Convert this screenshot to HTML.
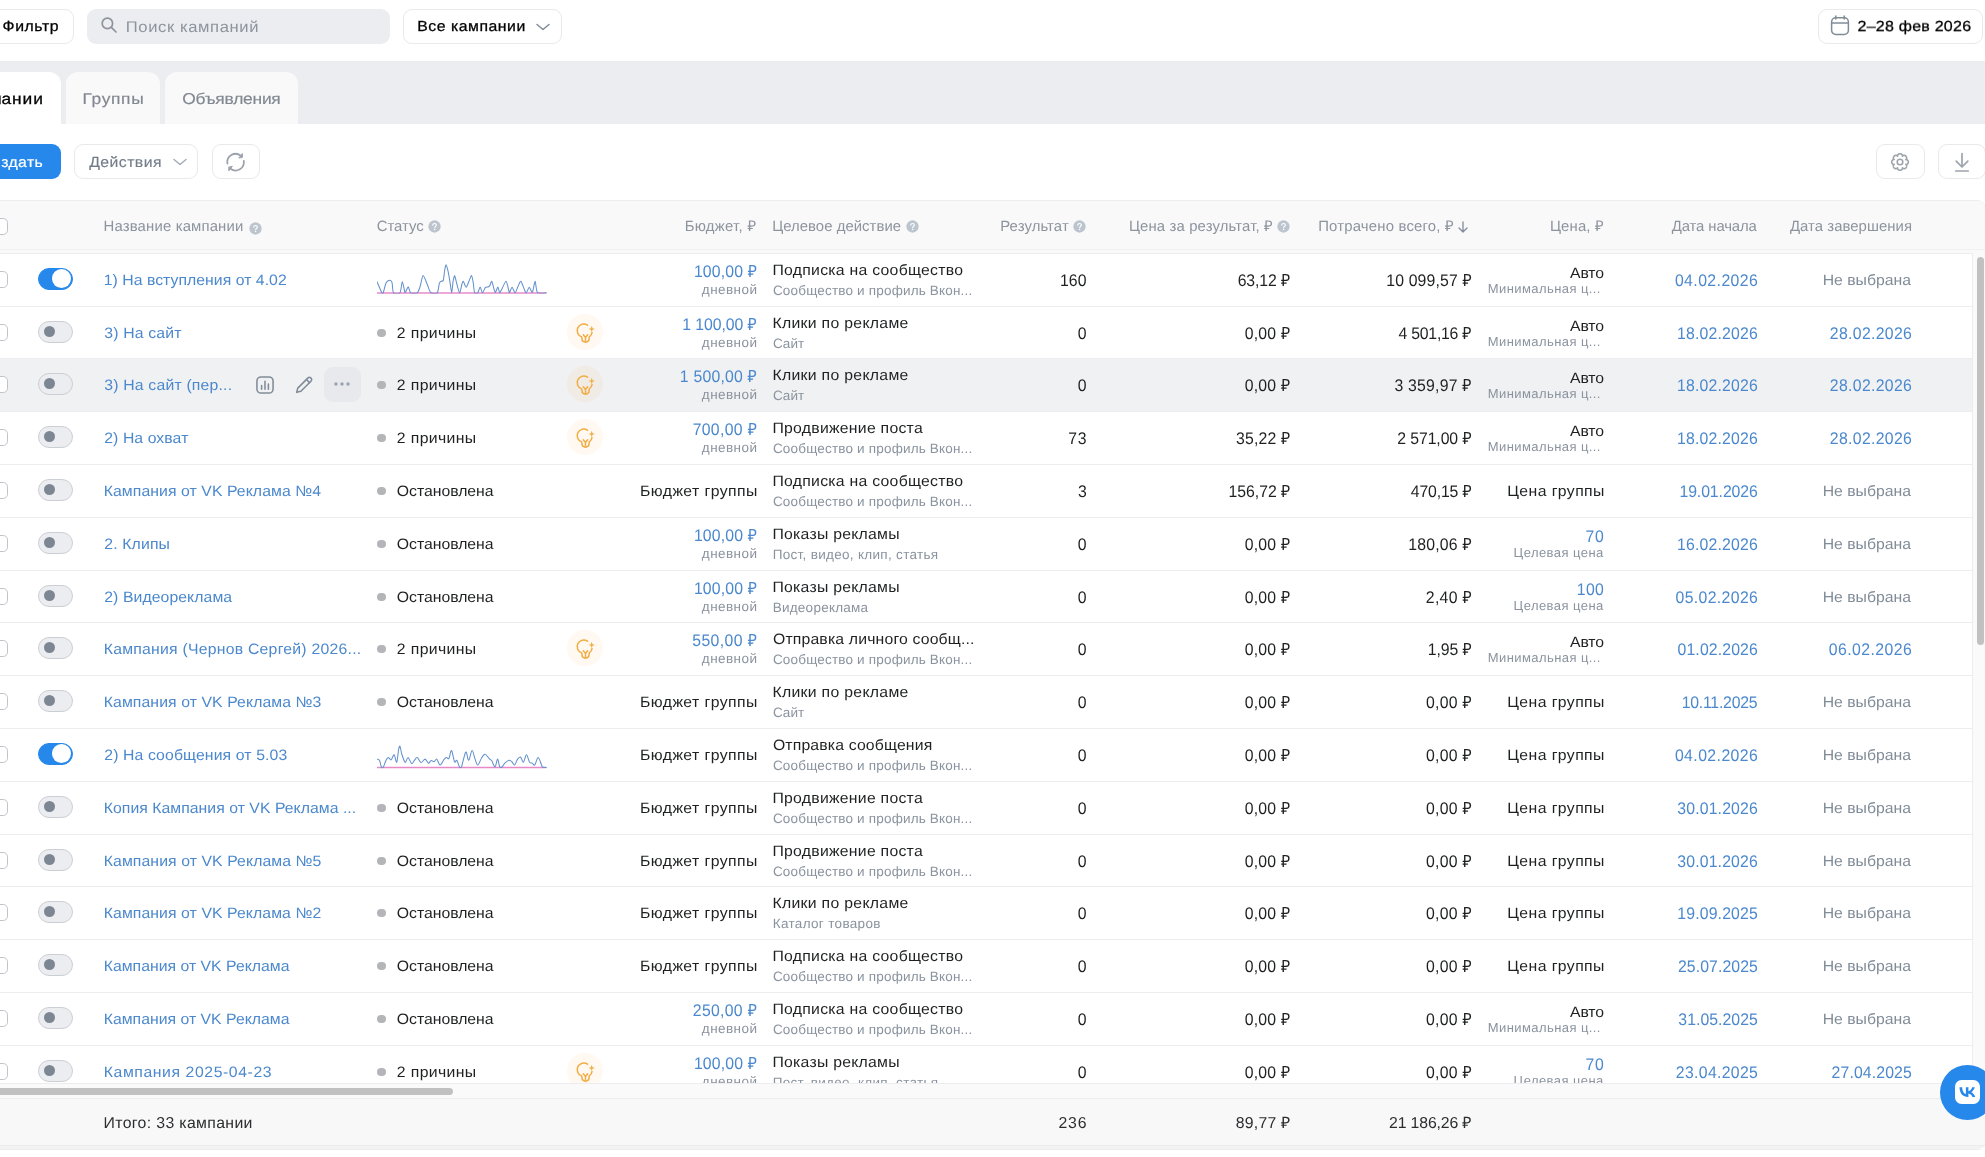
<!DOCTYPE html>
<html lang="ru"><head><meta charset="utf-8"><title>VK Реклама</title>
<style>
*{box-sizing:border-box;margin:0;padding:0}
html,body{width:1985px;height:1157px;overflow:hidden;background:#fff}
body{font-family:"Liberation Sans",sans-serif;font-size:15.8px;color:#000;position:relative;-webkit-font-smoothing:antialiased;text-rendering:geometricPrecision}
.t,.row{will-change:transform}
.abs{position:absolute}
.t span{position:absolute;line-height:20px;white-space:pre}
.btn{position:absolute;border:1px solid #e8e9eb;border-radius:9px;background:#fff;height:35px;top:8.5px;white-space:nowrap}
.band{position:absolute;left:0;top:60.6px;width:1985px;height:63.2px;background:#ebedf0}
.tab{position:absolute;top:71.5px;height:54px;background:#f9f9fa;border-radius:12px 12px 0 0}
.tab.act{background:#fff}
.tbl{position:absolute;left:-20px;top:199.5px;width:2005.5px;height:950.7px;background-clip:padding-box;border:1px solid #ededf0;border-radius:9px;background:#fff}
.thead{position:absolute;left:0;top:200.5px;width:1984.5px;height:52.5px;background:#f9f9fa;border-radius:0 8px 0 0}
.row{position:absolute;left:0;width:1972px;border-top:1px solid #ededf0;white-space:nowrap;overflow:hidden}
.row.hover{background:#f0f1f3}
.row>*{margin-top:-1px}
.row span{position:absolute;line-height:20px;white-space:pre}
.cb{position:absolute;left:-9.8px;top:17.8px;width:17.5px;height:17.5px;border:1.8px solid #bfc4cb;border-radius:4.8px;background:#fff}
.tg{left:37.8px;top:15.3px;width:35px;height:22px;border-radius:11px;background:#ebedf0;border:1.4px solid #cbced3}
.tg i{position:absolute;left:5.200px;top:4.100px;width:11px;height:11px;border-radius:50%;background:#7d8793}
.tg.on{background:#2688eb;border-color:#2688eb}
.tg.on i{left:13.500px;top:0.200px;width:18.800px;height:18.800px;background:#fff}
.dot{left:377.1px;top:22.6px;width:8.800px;height:8.800px;border-radius:50%;background:#b3b5b9}
.spark{position:absolute}
.bulb{left:567.2px;top:8.4px;width:36px;height:36px;border-radius:50%;background:rgba(255,165,40,0.065)}
.bulb svg{position:absolute;left:0.8px;top:1.3px}
.ric{top:15.9px;width:22px;height:22px}
.more{left:324.4px;top:9.2px;width:36.300px;height:34.6px;border-radius:9px;background:#e8e9ec}
.more svg{position:absolute;left:7.100px;top:6.300px}
.vtrack{position:absolute;left:1972px;top:253px;width:13px;height:830.5px;background:#fafafa;border-left:1px solid #ededf0}
.vthumb{position:absolute;left:1976.600px;top:257px;width:7px;height:388px;border-radius:4px;background:#c1c1c1}
.htrack{position:absolute;left:0;top:1083.3px;width:1985px;height:14.400px;background:#fafafa;border-top:1px solid #ededf0}
.hthumb{position:absolute;left:-10px;top:1088.2px;width:462.5px;height:7px;border-radius:4px;background:#c1c1c1}
.foot{position:absolute;left:0;top:1097.5px;width:1984.5px;height:51.7px;background:#f3f3f4;border-top:1px solid #ededf0;border-radius:0 0 8px 0}
.foot i{position:absolute;left:0;top:0;width:100%;height:47.8px;background:#f8f8f9;border-bottom:1px solid #ececee}
.vk{position:absolute;left:1940px;top:1064.5px;width:55px;height:55px;border-radius:50%;background:#2688eb}
</style></head><body>

<!-- top bar -->
<div class="btn" style="left:-40px;width:113.500px;"></div>
<div class="abs" style="left:87px;top:8.500px;width:303px;height:35px;border-radius:9px;background:#ebedf0"></div>
<svg class="abs" style="left:99.7px;top:15.6px" width="18" height="18" viewBox="0 0 18 18" fill="none" stroke="#8e949d" stroke-width="1.700" stroke-linecap="round"><circle cx="7.400" cy="7.400" r="5.200"/><path d="M11.400 11.400l4.600 4.600"/></svg>
<div class="btn" style="left:403px;width:159px;">
<svg class="abs" style="left:130.500px;top:12.500px" width="16" height="10" viewBox="0 0 16 10" fill="none" stroke="#818c99" stroke-width="1.500" stroke-linecap="round" stroke-linejoin="round"><path d="M2 2.500l6 5 6-5"/></svg></div>
<div class="btn" style="left:1818px;width:165.3px;"><svg class="abs" style="left:10.700px;top:5.300px" width="20" height="21" viewBox="0 0 20 21" fill="none" stroke="#818c99" stroke-width="1.500" stroke-linecap="round"><rect x="1.600" y="2.800" width="16.800" height="16.600" rx="4.200"/><path d="M1.800 8h16.400M5.800 1v3M14.200 1v3"/></svg></div>

<!-- tabs band -->
<div class="band"></div>
<div class="tab act" style="left:-80px;width:141px"></div>
<div class="tab" style="left:65.500px;width:94.500px"></div>
<div class="tab" style="left:165px;width:133px"></div>
<div class="abs" style="left:0;top:123.800px;width:1985px;height:76px;background:#fff"></div>

<!-- toolbar -->
<div class="abs" style="left:-50px;top:144px;width:111px;height:35px;border-radius:9px;background:#2688eb"></div>
<div class="btn" style="left:74.400px;top:144px;width:124px;height:35px">
<svg class="abs" style="left:96.500px;top:12.300px" width="16" height="10" viewBox="0 0 16 10" fill="none" stroke="#a3adb8" stroke-width="1.500" stroke-linecap="round" stroke-linejoin="round"><path d="M2 2.500l6 5 6-5"/></svg></div>
<div class="btn" style="left:212.300px;top:144px;width:47.500px;height:35px"><svg class="abs" style="left:-1px;top:-1.300px" width="48" height="36" viewBox="0 0 48 36" fill="none" stroke="#9ba2ac" stroke-width="1.750" stroke-linecap="round" stroke-linejoin="round"><path d="M15.430 19.640A8.300 8.300 0 0 1 28.710 11.660"/><path d="M31.770 16.760A8.300 8.300 0 0 1 18.490 24.740"/><path d="M30.440 13.020L30.310 9.610L27.110 13.710Z" fill="#9ba2ac" stroke-width="1"/><path d="M16.760 23.380L16.890 26.790L20.090 22.690Z" fill="#9ba2ac" stroke-width="1"/></svg></div>
<div class="btn" style="left:1876px;top:144px;width:49px;height:35px"><svg class="abs" style="left:10.900px;top:4.900px" width="24" height="24" viewBox="0 0 24 24" fill="none" stroke="#9ea4ac" stroke-width="1.600" stroke-linejoin="round"><circle cx="12" cy="12" r="2.800"/><path d="M20.30 12.00 L20.28 12.33 L20.22 12.65 L20.12 12.96 L19.98 13.26 L19.80 13.55 L19.58 13.82 L19.31 14.06 L18.99 14.27 L18.59 14.43 L17.82 14.41 L18.38 14.94 L18.55 15.34 L18.63 15.71 L18.64 16.07 L18.61 16.42 L18.54 16.75 L18.42 17.06 L18.27 17.36 L18.08 17.62 L17.87 17.87 L17.62 18.08 L17.36 18.27 L17.06 18.42 L16.75 18.54 L16.42 18.61 L16.07 18.64 L15.71 18.63 L15.34 18.55 L14.94 18.38 L14.41 17.82 L14.43 18.59 L14.27 18.99 L14.06 19.31 L13.82 19.58 L13.55 19.80 L13.26 19.98 L12.96 20.12 L12.65 20.22 L12.33 20.28 L12.00 20.30 L11.67 20.28 L11.35 20.22 L11.04 20.12 L10.74 19.98 L10.45 19.80 L10.18 19.58 L9.94 19.31 L9.73 18.99 L9.57 18.59 L9.59 17.82 L9.06 18.38 L8.66 18.55 L8.29 18.63 L7.93 18.64 L7.58 18.61 L7.25 18.54 L6.94 18.42 L6.64 18.27 L6.38 18.08 L6.13 17.87 L5.92 17.62 L5.73 17.36 L5.58 17.06 L5.46 16.75 L5.39 16.42 L5.36 16.07 L5.37 15.71 L5.45 15.34 L5.62 14.94 L6.18 14.41 L5.41 14.43 L5.01 14.27 L4.69 14.06 L4.42 13.82 L4.20 13.55 L4.02 13.26 L3.88 12.96 L3.78 12.65 L3.72 12.33 L3.70 12.00 L3.72 11.67 L3.78 11.35 L3.88 11.04 L4.02 10.74 L4.20 10.45 L4.42 10.18 L4.69 9.94 L5.01 9.73 L5.41 9.57 L6.18 9.59 L5.62 9.06 L5.45 8.66 L5.37 8.29 L5.36 7.93 L5.39 7.58 L5.46 7.25 L5.58 6.94 L5.73 6.64 L5.92 6.38 L6.13 6.13 L6.38 5.92 L6.64 5.73 L6.94 5.58 L7.25 5.46 L7.58 5.39 L7.93 5.36 L8.29 5.37 L8.66 5.45 L9.06 5.62 L9.59 6.18 L9.57 5.41 L9.73 5.01 L9.94 4.69 L10.18 4.42 L10.45 4.20 L10.74 4.02 L11.04 3.88 L11.35 3.78 L11.67 3.72 L12.00 3.70 L12.33 3.72 L12.65 3.78 L12.96 3.88 L13.26 4.02 L13.55 4.20 L13.82 4.42 L14.06 4.69 L14.27 5.01 L14.43 5.41 L14.41 6.18 L14.94 5.62 L15.34 5.45 L15.71 5.37 L16.07 5.36 L16.42 5.39 L16.75 5.46 L17.06 5.58 L17.36 5.73 L17.62 5.92 L17.87 6.13 L18.08 6.38 L18.27 6.64 L18.42 6.94 L18.54 7.25 L18.61 7.58 L18.64 7.93 L18.63 8.29 L18.55 8.66 L18.38 9.06 L17.82 9.59 L18.59 9.57 L18.99 9.73 L19.31 9.94 L19.58 10.18 L19.80 10.45 L19.98 10.74 L20.12 11.04 L20.22 11.35 L20.28 11.67Z"/></svg></div>
<div class="btn" style="left:1938.200px;top:144px;width:48px;height:35px"><svg class="abs" style="left:10.500px;top:4.200px" width="24" height="24" viewBox="0 0 24 24" fill="none" stroke="#9ea4ac" stroke-width="1.700" stroke-linecap="round" stroke-linejoin="round"><path d="M12 4.500v13M6.200 12.200l5.800 5.800 5.800-5.800M5.800 22h12.400"/></svg></div>
<div class="t"><span style="left:2.55px;top:16.80px;font-size:15.8px;letter-spacing:0.590px;color:#000;-webkit-text-stroke:0.3px currentColor;transform:scaleY(0.93);transform-origin:0 15.4px;">Фильтр</span><span style="left:125.75px;top:17.10px;font-size:16.6px;letter-spacing:0.612px;color:#8e949d;transform:scaleY(0.93);transform-origin:0 15.7px;">Поиск кампаний</span><span style="left:417.25px;top:16.80px;font-size:15.8px;letter-spacing:0.527px;color:#000;-webkit-text-stroke:0.3px currentColor;transform:scaleY(0.93);transform-origin:0 15.4px;">Все кампании</span><span style="left:1857.55px;top:16.80px;font-size:16.0px;letter-spacing:0.238px;color:#000;-webkit-text-stroke:0.3px currentColor;transform:scaleY(0.93);transform-origin:0 15.4px;">2–28 фев 2026</span><span style="left:1.50px;top:87.60px;font-size:17.4px;letter-spacing:0.900px;color:#000;-webkit-text-stroke:0.3px currentColor;transform:scaleY(0.9);transform-origin:0 16px;">ании</span><span style="left:-7.65px;top:87.60px;font-size:17.4px;color:#000;-webkit-text-stroke:0.3px currentColor;transform:scaleY(0.9);transform-origin:0 16px;">п</span><span style="left:82.45px;top:87.60px;font-size:17.4px;letter-spacing:0.660px;color:#828891;-webkit-text-stroke:0.2px currentColor;transform:scaleY(0.9);transform-origin:0 16px;">Группы</span><span style="left:182.25px;top:87.60px;font-size:17.4px;letter-spacing:-0.228px;color:#828891;-webkit-text-stroke:0.2px currentColor;transform:scaleY(0.9);transform-origin:0 16px;">Объявления</span><span style="left:1.15px;top:153.40px;font-size:15.8px;letter-spacing:0.412px;color:#fff;-webkit-text-stroke:0.2px currentColor;transform:scaleY(0.93);transform-origin:0 15.4px;">здать</span><span style="left:89.20px;top:153.40px;font-size:15.8px;letter-spacing:0.436px;color:#727c89;-webkit-text-stroke:0.15px currentColor;transform:scaleY(0.93);transform-origin:0 15.4px;">Действия</span></div>

<!-- table -->
<div class="tbl"></div>
<div class="thead"></div><div class="abs" style="left:0;top:249px;width:1984px;height:1.300px;background:#f0f0f2"></div>
<span class="cb" style="top:217.800px"></span>
<div class="t"><span style="left:103.55px;top:217.00px;font-size:14.9px;letter-spacing:0.156px;color:#8d949e;">Название кампании</span><span style="left:376.65px;top:217.00px;font-size:14.9px;letter-spacing:0.010px;color:#8d949e;">Статус</span><span style="left:684.65px;top:217.00px;font-size:14.9px;letter-spacing:0.281px;color:#8d949e;">Бюджет, ₽</span><span style="left:772.15px;top:217.00px;font-size:14.9px;letter-spacing:0.043px;color:#8d949e;">Целевое действие</span><span style="left:1000.25px;top:217.00px;font-size:14.9px;letter-spacing:0.094px;color:#8d949e;">Результат</span><span style="left:1128.95px;top:217.00px;font-size:14.9px;letter-spacing:0.134px;color:#8d949e;">Цена за результат, ₽</span><span style="left:1318.15px;top:217.00px;font-size:14.9px;letter-spacing:0.197px;color:#8d949e;">Потрачено всего, ₽</span><span style="left:1549.95px;top:217.00px;font-size:14.9px;letter-spacing:0.150px;color:#8d949e;">Цена, ₽</span><span style="left:1671.80px;top:217.00px;font-size:14.9px;letter-spacing:-0.125px;color:#8d949e;">Дата начала</span><span style="left:1789.90px;top:217.00px;font-size:14.9px;letter-spacing:0.054px;color:#8d949e;">Дата завершения</span></div>
<svg class="abs" style="left:249.2px;top:221.8px" width="13" height="13" viewBox="0 0 16 16"><circle cx="8" cy="8" r="7.600" fill="#bcc4ce"/><path d="M5.900 6.300c0-1.200 1-2 2.200-2s2.100.800 2.100 1.900c0 1.600-2 1.700-2 3.300" fill="none" stroke="#fff" stroke-width="1.500" stroke-linecap="round"/><circle cx="8.100" cy="11.700" r="0.950" fill="#fff"/></svg><svg class="abs" style="left:428.0px;top:220.0px" width="13" height="13" viewBox="0 0 16 16"><circle cx="8" cy="8" r="7.600" fill="#bcc4ce"/><path d="M5.900 6.300c0-1.200 1-2 2.200-2s2.100.800 2.100 1.900c0 1.600-2 1.700-2 3.300" fill="none" stroke="#fff" stroke-width="1.500" stroke-linecap="round"/><circle cx="8.100" cy="11.700" r="0.950" fill="#fff"/></svg><svg class="abs" style="left:905.5px;top:220.0px" width="13" height="13" viewBox="0 0 16 16"><circle cx="8" cy="8" r="7.600" fill="#bcc4ce"/><path d="M5.900 6.300c0-1.200 1-2 2.200-2s2.100.800 2.100 1.900c0 1.600-2 1.700-2 3.300" fill="none" stroke="#fff" stroke-width="1.500" stroke-linecap="round"/><circle cx="8.100" cy="11.700" r="0.950" fill="#fff"/></svg><svg class="abs" style="left:1073.3px;top:220.0px" width="13" height="13" viewBox="0 0 16 16"><circle cx="8" cy="8" r="7.600" fill="#bcc4ce"/><path d="M5.900 6.300c0-1.200 1-2 2.200-2s2.100.800 2.100 1.900c0 1.600-2 1.700-2 3.300" fill="none" stroke="#fff" stroke-width="1.500" stroke-linecap="round"/><circle cx="8.100" cy="11.700" r="0.950" fill="#fff"/></svg><svg class="abs" style="left:1277.1px;top:220.0px" width="13" height="13" viewBox="0 0 16 16"><circle cx="8" cy="8" r="7.600" fill="#bcc4ce"/><path d="M5.900 6.300c0-1.200 1-2 2.200-2s2.100.800 2.100 1.900c0 1.600-2 1.700-2 3.300" fill="none" stroke="#fff" stroke-width="1.500" stroke-linecap="round"/><circle cx="8.100" cy="11.700" r="0.950" fill="#fff"/></svg>
<svg class="abs" style="left:1456.700px;top:220px" width="12" height="14" viewBox="0 0 12 14" fill="none" stroke="#838c98" stroke-width="1.300" stroke-linecap="round" stroke-linejoin="round"><path d="M6 1.800v10M2 8l4 4 4-4"/></svg>

<div class="abs" style="left:0;top:0;width:1985px;height:1083.300px;overflow:hidden">
<div class="row" style="top:253px;height:53px"><span class="cb"></span><span class="tg on"><i></i></span><span style="left:103.75px;top:18.00px;font-size:15.8px;letter-spacing:0.028px;color:#4b88cd;transform:scaleY(0.955);transform-origin:0 15.4px;">1) На вступления от 4.02</span><svg class="spark" style="left:377.3px;top:0" width="172" height="52" viewBox="0 0 172 52"><defs><clipPath id="c258"><rect x="-1" y="0" width="174" height="40.49"/></clipPath></defs><line x1="0" y1="39.94" x2="169.3" y2="39.94" stroke="#e88ac8" stroke-width="1.5"/><path d="M-0.03,28.67 C0.53,29.97 4.09,38.54 4.82,39.85 C5.54,41.15 5.72,40.99 6.21,39.85 C6.70,38.71 8.25,31.53 9.01,30.06 C9.77,28.60 12.03,27.32 12.74,27.27 C13.44,27.21 14.63,28.13 15.07,29.60 C15.50,31.06 15.54,38.65 16.47,39.85 C17.39,41.04 21.96,41.15 22.99,39.85 C24.02,38.54 24.74,28.72 25.32,28.67 C25.90,28.61 27.44,38.40 27.93,39.38 C28.42,40.36 29.11,37.68 29.51,37.05 C29.91,36.42 30.89,33.65 31.38,33.98 C31.87,34.30 32.67,39.16 33.71,39.85 C34.74,40.53 39.14,40.56 40.23,39.85 C41.32,39.14 42.34,35.80 43.03,33.79 C43.71,31.78 45.23,22.82 46.10,22.61 C46.97,22.39 49.59,29.95 50.48,31.93 C51.37,33.91 52.60,38.64 53.74,39.57 C54.89,40.49 59.26,40.96 60.27,39.85 C61.28,38.74 61.92,31.42 62.41,30.06 C62.90,28.70 64.00,28.53 64.46,28.20 C64.92,27.87 65.94,28.57 66.33,27.27 C66.71,25.96 67.40,18.81 67.72,17.02 C68.05,15.22 68.74,11.78 69.12,11.89 C69.50,12.00 70.55,16.04 70.99,17.95 C71.42,19.85 72.41,25.64 72.85,28.20 C73.28,30.75 74.33,39.85 74.71,39.85 C75.09,39.85 75.76,30.19 76.11,28.20 C76.46,26.21 77.26,22.47 77.70,22.79 C78.13,23.12 79.26,29.01 79.84,31.00 C80.42,32.98 82.04,39.85 82.63,39.85 C83.23,39.85 84.53,32.33 84.96,31.00 C85.40,29.66 85.87,28.01 86.36,28.39 C86.85,28.77 88.51,34.28 89.16,34.26 C89.81,34.24 91.33,29.56 91.95,28.20 C92.57,26.84 93.98,22.50 94.47,22.61 C94.96,22.72 95.79,27.15 96.15,29.13 C96.51,31.11 97.00,38.32 97.55,39.57 C98.09,40.82 100.16,40.50 100.81,39.85 C101.46,39.20 102.59,33.98 103.14,33.98 C103.68,33.98 104.87,39.76 105.47,39.85 C106.07,39.94 107.56,35.43 108.26,34.72 C108.97,34.02 110.98,34.06 111.53,33.79 C112.07,33.52 112.54,33.02 112.92,32.39 C113.30,31.76 114.30,27.90 114.79,28.39 C115.28,28.87 116.68,35.30 117.12,36.59 C117.55,37.87 118.08,39.69 118.52,39.38 C118.95,39.08 120.36,33.92 120.85,33.98 C121.33,34.03 122.22,39.65 122.71,39.85 C123.20,40.04 124.30,37.01 125.04,35.65 C125.78,34.30 128.29,28.09 129.05,28.20 C129.81,28.31 131.16,35.26 131.56,36.59 C131.97,37.91 132.08,39.84 132.49,39.57 C132.91,39.30 134.45,34.22 135.10,34.26 C135.76,34.29 137.41,39.90 138.09,39.85 C138.76,39.79 140.21,35.15 140.88,33.79 C141.56,32.43 143.10,27.87 143.86,28.20 C144.63,28.53 146.78,35.23 147.41,36.59 C148.04,37.95 148.70,40.12 149.27,39.85 C149.84,39.58 151.55,34.31 152.25,34.26 C152.96,34.20 154.64,40.07 155.33,39.38 C156.01,38.70 157.53,28.36 158.12,28.39 C158.72,28.41 159.15,38.23 160.45,39.57 C161.76,40.91 168.27,39.82 169.31,39.85" clip-path="url(#c258)" fill="none" stroke="#6391cd" stroke-width="1.05" stroke-linejoin="round" stroke-linecap="round"/></svg><span style="left:693.95px;top:10.40px;font-size:15.8px;letter-spacing:0.143px;color:#4b88cd;transform:scaleY(1.07);transform-origin:0 15.4px;">100,00 ₽</span><span style="left:701.85px;top:27.20px;font-size:13.5px;letter-spacing:0.442px;color:#8a939e;">дневной</span><span style="left:772.45px;top:8.10px;font-size:15.8px;letter-spacing:0.262px;color:#1f2021;transform:scaleY(0.955);transform-origin:0 15.4px;">Подписка на сообщество</span><span style="left:772.95px;top:28.30px;font-size:13.5px;letter-spacing:0.181px;color:#8a939e;">Сообщество и профиль Вкон...</span><span style="left:1059.95px;top:18.90px;font-size:15.8px;letter-spacing:0.100px;color:#1f2021;transform:scaleY(1.07);transform-origin:0 15.4px;">160</span><span style="left:1237.65px;top:18.90px;font-size:15.8px;letter-spacing:-0.092px;color:#1f2021;transform:scaleY(1.07);transform-origin:0 15.4px;">63,12 ₽</span><span style="left:1386.25px;top:18.90px;font-size:15.8px;letter-spacing:0.150px;color:#1f2021;transform:scaleY(1.07);transform-origin:0 15.4px;">10 099,57 ₽</span><span style="left:1570.00px;top:10.60px;font-size:15.8px;letter-spacing:-0.150px;color:#1f2021;transform:scaleY(0.955);transform-origin:0 15.4px;">Авто</span><span style="left:1487.80px;top:25.60px;font-size:13.0px;letter-spacing:0.417px;color:#8a939e;">Минимальная ц...</span><span style="left:1674.90px;top:18.90px;font-size:15.8px;letter-spacing:0.428px;color:#4b88cd;transform:scaleY(1.07);transform-origin:0 15.4px;">04.02.2026</span><span style="left:1822.65px;top:18.00px;font-size:15.8px;letter-spacing:-0.017px;color:#818c99;transform:scaleY(0.955);transform-origin:0 15.4px;">Не выбрана</span></div>
<div class="row" style="top:306px;height:52px"><span class="cb"></span><span class="tg "><i></i></span><span style="left:104.25px;top:18.00px;font-size:15.8px;letter-spacing:0.161px;color:#4b88cd;transform:scaleY(0.955);transform-origin:0 15.4px;">3) На сайт</span><span class="dot"></span><span style="left:396.85px;top:18.00px;font-size:15.8px;letter-spacing:0.356px;color:#1f2021;transform:scaleY(0.955);transform-origin:0 15.4px;">2 причины</span><span class="bulb"><svg width="36" height="36" viewBox="0 0 36 36" fill="none" stroke="#f2ac44" stroke-width="1.5" stroke-linecap="round" stroke-linejoin="round"><path d="M19.54 9.22A6.6 6.6 0 1 0 13.71 20.91L14.3 24.6Q17.5 27.6 20.7 24.6L21.29 20.91A6.6 6.6 0 0 0 24.04 16.42"/><path d="M15.3 18.8L17.5 21.5L19.7 18.8M17.5 21.5V24.8"/><path d="M23.7 9.7l.85 2.450 2.450.85-2.450.85-.85 2.450-.85-2.450-2.450-.85 2.450-.85z" fill="#f2ac44" stroke="none"/></svg></span><span style="left:682.35px;top:10.40px;font-size:15.8px;letter-spacing:-0.072px;color:#4b88cd;transform:scaleY(1.07);transform-origin:0 15.4px;">1 100,00 ₽</span><span style="left:701.85px;top:27.20px;font-size:13.5px;letter-spacing:0.442px;color:#8a939e;">дневной</span><span style="left:772.45px;top:8.10px;font-size:15.8px;letter-spacing:0.300px;color:#1f2021;transform:scaleY(0.955);transform-origin:0 15.4px;">Клики по рекламе</span><span style="left:772.95px;top:28.30px;font-size:13.5px;letter-spacing:0.017px;color:#8a939e;">Сайт</span><span style="left:1077.65px;top:18.90px;font-size:15.8px;color:#1f2021;transform:scaleY(1.07);transform-origin:0 15.4px;">0</span><span style="left:1244.70px;top:18.90px;font-size:15.8px;letter-spacing:0.230px;color:#1f2021;transform:scaleY(1.07);transform-origin:0 15.4px;">0,00 ₽</span><span style="left:1398.45px;top:18.90px;font-size:15.8px;letter-spacing:-0.217px;color:#1f2021;transform:scaleY(1.07);transform-origin:0 15.4px;">4 501,16 ₽</span><span style="left:1570.00px;top:10.60px;font-size:15.8px;letter-spacing:-0.150px;color:#1f2021;transform:scaleY(0.955);transform-origin:0 15.4px;">Авто</span><span style="left:1487.80px;top:25.60px;font-size:13.0px;letter-spacing:0.417px;color:#8a939e;">Минимальная ц...</span><span style="left:1677.05px;top:18.90px;font-size:15.8px;letter-spacing:0.189px;color:#4b88cd;transform:scaleY(1.07);transform-origin:0 15.4px;">18.02.2026</span><span style="left:1829.85px;top:18.90px;font-size:15.8px;letter-spacing:0.322px;color:#4b88cd;transform:scaleY(1.07);transform-origin:0 15.4px;">28.02.2026</span></div>
<div class="row hover" style="top:358px;height:53px"><span class="cb"></span><span class="tg "><i></i></span><span style="left:104.25px;top:18.00px;font-size:15.8px;letter-spacing:0.182px;color:#4b88cd;transform:scaleY(0.955);transform-origin:0 15.4px;">3) На сайт (пер...</span><span class="ric" style="left:254.4px"><svg width="22" height="22" viewBox="0 0 24 24" fill="none" stroke="#818c99" stroke-width="1.700" stroke-linecap="round"><rect x="3.200" y="3.200" width="17.600" height="17.600" rx="4.500"/><path d="M8.300 12.500v4M12 8v8.500M15.700 11v5.500"/></svg></span><span class="ric" style="left:292.5px"><svg width="22" height="22" viewBox="0 0 24 24" fill="none" stroke="#818c99" stroke-width="1.700" stroke-linecap="round" stroke-linejoin="round"><path d="M4 20l1.200-4.600L16.400 4.200a2 2 0 0 1 2.800 0l.6.600a2 2 0 0 1 0 2.800L8.600 18.800z"/><path d="M14.600 6l3.400 3.400"/></svg></span><span class="more"><svg width="22" height="22" viewBox="0 0 24 24" fill="#99a2ad"><circle cx="5.400" cy="12" r="1.850"/><circle cx="12" cy="12" r="1.850"/><circle cx="18.600" cy="12" r="1.850"/></svg></span><span class="dot"></span><span style="left:396.85px;top:18.00px;font-size:15.8px;letter-spacing:0.356px;color:#1f2021;transform:scaleY(0.955);transform-origin:0 15.4px;">2 причины</span><span class="bulb"><svg width="36" height="36" viewBox="0 0 36 36" fill="none" stroke="#f2ac44" stroke-width="1.5" stroke-linecap="round" stroke-linejoin="round"><path d="M19.54 9.22A6.6 6.6 0 1 0 13.71 20.91L14.3 24.6Q17.5 27.6 20.7 24.6L21.29 20.91A6.6 6.6 0 0 0 24.04 16.42"/><path d="M15.3 18.8L17.5 21.5L19.7 18.8M17.5 21.5V24.8"/><path d="M23.7 9.7l.85 2.450 2.450.85-2.450.85-.85 2.450-.85-2.450-2.450-.85 2.450-.85z" fill="#f2ac44" stroke="none"/></svg></span><span style="left:679.85px;top:10.40px;font-size:15.8px;letter-spacing:0.206px;color:#4b88cd;transform:scaleY(1.07);transform-origin:0 15.4px;">1 500,00 ₽</span><span style="left:701.85px;top:27.20px;font-size:13.5px;letter-spacing:0.442px;color:#8a939e;">дневной</span><span style="left:772.45px;top:8.10px;font-size:15.8px;letter-spacing:0.300px;color:#1f2021;transform:scaleY(0.955);transform-origin:0 15.4px;">Клики по рекламе</span><span style="left:772.95px;top:28.30px;font-size:13.5px;letter-spacing:0.017px;color:#8a939e;">Сайт</span><span style="left:1077.65px;top:18.90px;font-size:15.8px;color:#1f2021;transform:scaleY(1.07);transform-origin:0 15.4px;">0</span><span style="left:1244.70px;top:18.90px;font-size:15.8px;letter-spacing:0.230px;color:#1f2021;transform:scaleY(1.07);transform-origin:0 15.4px;">0,00 ₽</span><span style="left:1394.45px;top:18.90px;font-size:15.8px;letter-spacing:0.228px;color:#1f2021;transform:scaleY(1.07);transform-origin:0 15.4px;">3 359,97 ₽</span><span style="left:1570.00px;top:10.60px;font-size:15.8px;letter-spacing:-0.150px;color:#1f2021;transform:scaleY(0.955);transform-origin:0 15.4px;">Авто</span><span style="left:1487.80px;top:25.60px;font-size:13.0px;letter-spacing:0.417px;color:#8a939e;">Минимальная ц...</span><span style="left:1677.05px;top:18.90px;font-size:15.8px;letter-spacing:0.189px;color:#4b88cd;transform:scaleY(1.07);transform-origin:0 15.4px;">18.02.2026</span><span style="left:1829.85px;top:18.90px;font-size:15.8px;letter-spacing:0.322px;color:#4b88cd;transform:scaleY(1.07);transform-origin:0 15.4px;">28.02.2026</span></div>
<div class="row" style="top:411px;height:53px"><span class="cb"></span><span class="tg "><i></i></span><span style="left:104.25px;top:18.00px;font-size:15.8px;letter-spacing:0.070px;color:#4b88cd;transform:scaleY(0.955);transform-origin:0 15.4px;">2) На охват</span><span class="dot"></span><span style="left:396.85px;top:18.00px;font-size:15.8px;letter-spacing:0.356px;color:#1f2021;transform:scaleY(0.955);transform-origin:0 15.4px;">2 причины</span><span class="bulb"><svg width="36" height="36" viewBox="0 0 36 36" fill="none" stroke="#f2ac44" stroke-width="1.5" stroke-linecap="round" stroke-linejoin="round"><path d="M19.54 9.22A6.6 6.6 0 1 0 13.71 20.91L14.3 24.6Q17.5 27.6 20.7 24.6L21.29 20.91A6.6 6.6 0 0 0 24.04 16.42"/><path d="M15.3 18.8L17.5 21.5L19.7 18.8M17.5 21.5V24.8"/><path d="M23.7 9.7l.85 2.450 2.450.85-2.450.85-.85 2.450-.85-2.450-2.450-.85 2.450-.85z" fill="#f2ac44" stroke="none"/></svg></span><span style="left:692.65px;top:10.40px;font-size:15.8px;letter-spacing:0.329px;color:#4b88cd;transform:scaleY(1.07);transform-origin:0 15.4px;">700,00 ₽</span><span style="left:701.85px;top:27.20px;font-size:13.5px;letter-spacing:0.442px;color:#8a939e;">дневной</span><span style="left:772.45px;top:8.10px;font-size:15.8px;letter-spacing:0.256px;color:#1f2021;transform:scaleY(0.955);transform-origin:0 15.4px;">Продвижение поста</span><span style="left:772.95px;top:28.30px;font-size:13.5px;letter-spacing:0.181px;color:#8a939e;">Сообщество и профиль Вкон...</span><span style="left:1068.25px;top:18.90px;font-size:15.8px;letter-spacing:0.650px;color:#1f2021;transform:scaleY(1.07);transform-origin:0 15.4px;">73</span><span style="left:1235.95px;top:18.90px;font-size:15.8px;letter-spacing:0.192px;color:#1f2021;transform:scaleY(1.07);transform-origin:0 15.4px;">35,22 ₽</span><span style="left:1397.25px;top:18.90px;font-size:15.8px;letter-spacing:-0.083px;color:#1f2021;transform:scaleY(1.07);transform-origin:0 15.4px;">2 571,00 ₽</span><span style="left:1570.00px;top:10.60px;font-size:15.8px;letter-spacing:-0.150px;color:#1f2021;transform:scaleY(0.955);transform-origin:0 15.4px;">Авто</span><span style="left:1487.80px;top:25.60px;font-size:13.0px;letter-spacing:0.417px;color:#8a939e;">Минимальная ц...</span><span style="left:1677.05px;top:18.90px;font-size:15.8px;letter-spacing:0.189px;color:#4b88cd;transform:scaleY(1.07);transform-origin:0 15.4px;">18.02.2026</span><span style="left:1829.85px;top:18.90px;font-size:15.8px;letter-spacing:0.322px;color:#4b88cd;transform:scaleY(1.07);transform-origin:0 15.4px;">28.02.2026</span></div>
<div class="row" style="top:464px;height:53px"><span class="cb"></span><span class="tg "><i></i></span><span style="left:103.75px;top:18.00px;font-size:15.8px;letter-spacing:0.067px;color:#4b88cd;transform:scaleY(0.955);transform-origin:0 15.4px;">Кампания от VK Реклама №4</span><span class="dot"></span><span style="left:396.85px;top:18.00px;font-size:15.8px;letter-spacing:-0.035px;color:#1f2021;transform:scaleY(0.955);transform-origin:0 15.4px;">Остановлена</span><span style="left:640.05px;top:18.00px;font-size:15.8px;letter-spacing:0.417px;color:#1f2021;transform:scaleY(0.955);transform-origin:0 15.4px;">Бюджет группы</span><span style="left:772.45px;top:8.10px;font-size:15.8px;letter-spacing:0.262px;color:#1f2021;transform:scaleY(0.955);transform-origin:0 15.4px;">Подписка на сообщество</span><span style="left:772.95px;top:28.30px;font-size:13.5px;letter-spacing:0.181px;color:#8a939e;">Сообщество и профиль Вкон...</span><span style="left:1077.90px;top:18.90px;font-size:15.8px;color:#1f2021;transform:scaleY(1.07);transform-origin:0 15.4px;">3</span><span style="left:1228.45px;top:18.90px;font-size:15.8px;letter-spacing:-0.014px;color:#1f2021;transform:scaleY(1.07);transform-origin:0 15.4px;">156,72 ₽</span><span style="left:1410.85px;top:18.90px;font-size:15.8px;letter-spacing:-0.157px;color:#1f2021;transform:scaleY(1.07);transform-origin:0 15.4px;">470,15 ₽</span><span style="left:1507.25px;top:18.00px;font-size:15.8px;letter-spacing:0.405px;color:#1f2021;transform:scaleY(0.955);transform-origin:0 15.4px;">Цена группы</span><span style="left:1679.45px;top:18.90px;font-size:15.8px;letter-spacing:-0.078px;color:#4b88cd;transform:scaleY(1.07);transform-origin:0 15.4px;">19.01.2026</span><span style="left:1822.65px;top:18.00px;font-size:15.8px;letter-spacing:-0.017px;color:#818c99;transform:scaleY(0.955);transform-origin:0 15.4px;">Не выбрана</span></div>
<div class="row" style="top:517px;height:53px"><span class="cb"></span><span class="tg "><i></i></span><span style="left:104.25px;top:18.00px;font-size:15.8px;letter-spacing:0.143px;color:#4b88cd;transform:scaleY(0.955);transform-origin:0 15.4px;">2. Клипы</span><span class="dot"></span><span style="left:396.85px;top:18.00px;font-size:15.8px;letter-spacing:-0.035px;color:#1f2021;transform:scaleY(0.955);transform-origin:0 15.4px;">Остановлена</span><span style="left:693.95px;top:10.40px;font-size:15.8px;letter-spacing:0.143px;color:#4b88cd;transform:scaleY(1.07);transform-origin:0 15.4px;">100,00 ₽</span><span style="left:701.85px;top:27.20px;font-size:13.5px;letter-spacing:0.442px;color:#8a939e;">дневной</span><span style="left:772.45px;top:8.10px;font-size:15.8px;letter-spacing:0.246px;color:#1f2021;transform:scaleY(0.955);transform-origin:0 15.4px;">Показы рекламы</span><span style="left:772.70px;top:28.30px;font-size:13.5px;letter-spacing:0.308px;color:#8a939e;">Пост, видео, клип, статья</span><span style="left:1077.65px;top:18.90px;font-size:15.8px;color:#1f2021;transform:scaleY(1.07);transform-origin:0 15.4px;">0</span><span style="left:1244.70px;top:18.90px;font-size:15.8px;letter-spacing:0.230px;color:#1f2021;transform:scaleY(1.07);transform-origin:0 15.4px;">0,00 ₽</span><span style="left:1408.15px;top:18.90px;font-size:15.8px;letter-spacing:0.229px;color:#1f2021;transform:scaleY(1.07);transform-origin:0 15.4px;">180,06 ₽</span><span style="left:1585.45px;top:11.10px;font-size:15.8px;letter-spacing:0.850px;color:#4b88cd;transform:scaleY(1.07);transform-origin:0 15.4px;">70</span><span style="left:1513.60px;top:25.60px;font-size:13.0px;letter-spacing:0.450px;color:#8a939e;">Целевая цена</span><span style="left:1676.95px;top:18.90px;font-size:15.8px;letter-spacing:0.200px;color:#4b88cd;transform:scaleY(1.07);transform-origin:0 15.4px;">16.02.2026</span><span style="left:1822.65px;top:18.00px;font-size:15.8px;letter-spacing:-0.017px;color:#818c99;transform:scaleY(0.955);transform-origin:0 15.4px;">Не выбрана</span></div>
<div class="row" style="top:570px;height:52px"><span class="cb"></span><span class="tg "><i></i></span><span style="left:104.25px;top:18.00px;font-size:15.8px;letter-spacing:0.068px;color:#4b88cd;transform:scaleY(0.955);transform-origin:0 15.4px;">2) Видеореклама</span><span class="dot"></span><span style="left:396.85px;top:18.00px;font-size:15.8px;letter-spacing:-0.035px;color:#1f2021;transform:scaleY(0.955);transform-origin:0 15.4px;">Остановлена</span><span style="left:693.95px;top:10.40px;font-size:15.8px;letter-spacing:0.143px;color:#4b88cd;transform:scaleY(1.07);transform-origin:0 15.4px;">100,00 ₽</span><span style="left:701.85px;top:27.20px;font-size:13.5px;letter-spacing:0.442px;color:#8a939e;">дневной</span><span style="left:772.45px;top:8.10px;font-size:15.8px;letter-spacing:0.246px;color:#1f2021;transform:scaleY(0.955);transform-origin:0 15.4px;">Показы рекламы</span><span style="left:772.70px;top:28.30px;font-size:13.5px;letter-spacing:0.250px;color:#8a939e;">Видеореклама</span><span style="left:1077.65px;top:18.90px;font-size:15.8px;color:#1f2021;transform:scaleY(1.07);transform-origin:0 15.4px;">0</span><span style="left:1244.70px;top:18.90px;font-size:15.8px;letter-spacing:0.230px;color:#1f2021;transform:scaleY(1.07);transform-origin:0 15.4px;">0,00 ₽</span><span style="left:1425.85px;top:18.90px;font-size:15.8px;letter-spacing:0.280px;color:#1f2021;transform:scaleY(1.07);transform-origin:0 15.4px;">2,40 ₽</span><span style="left:1576.75px;top:11.10px;font-size:15.8px;letter-spacing:0.400px;color:#4b88cd;transform:scaleY(1.07);transform-origin:0 15.4px;">100</span><span style="left:1513.60px;top:25.60px;font-size:13.0px;letter-spacing:0.450px;color:#8a939e;">Целевая цена</span><span style="left:1675.50px;top:18.90px;font-size:15.8px;letter-spacing:0.361px;color:#4b88cd;transform:scaleY(1.07);transform-origin:0 15.4px;">05.02.2026</span><span style="left:1822.65px;top:18.00px;font-size:15.8px;letter-spacing:-0.017px;color:#818c99;transform:scaleY(0.955);transform-origin:0 15.4px;">Не выбрана</span></div>
<div class="row" style="top:622px;height:53px"><span class="cb"></span><span class="tg "><i></i></span><span style="left:103.75px;top:18.00px;font-size:15.8px;letter-spacing:0.229px;color:#4b88cd;transform:scaleY(0.955);transform-origin:0 15.4px;">Кампания (Чернов Сергей) 2026...</span><span class="dot"></span><span style="left:396.85px;top:18.00px;font-size:15.8px;letter-spacing:0.356px;color:#1f2021;transform:scaleY(0.955);transform-origin:0 15.4px;">2 причины</span><span class="bulb"><svg width="36" height="36" viewBox="0 0 36 36" fill="none" stroke="#f2ac44" stroke-width="1.5" stroke-linecap="round" stroke-linejoin="round"><path d="M19.54 9.22A6.6 6.6 0 1 0 13.71 20.91L14.3 24.6Q17.5 27.6 20.7 24.6L21.29 20.91A6.6 6.6 0 0 0 24.04 16.42"/><path d="M15.3 18.8L17.5 21.5L19.7 18.8M17.5 21.5V24.8"/><path d="M23.7 9.7l.85 2.450 2.450.85-2.450.85-.85 2.450-.85-2.450-2.450-.85 2.450-.85z" fill="#f2ac44" stroke="none"/></svg></span><span style="left:692.25px;top:10.40px;font-size:15.8px;letter-spacing:0.386px;color:#4b88cd;transform:scaleY(1.07);transform-origin:0 15.4px;">550,00 ₽</span><span style="left:701.85px;top:27.20px;font-size:13.5px;letter-spacing:0.442px;color:#8a939e;">дневной</span><span style="left:772.95px;top:8.10px;font-size:15.8px;letter-spacing:0.158px;color:#1f2021;transform:scaleY(0.955);transform-origin:0 15.4px;">Отправка личного сообщ...</span><span style="left:772.95px;top:28.30px;font-size:13.5px;letter-spacing:0.181px;color:#8a939e;">Сообщество и профиль Вкон...</span><span style="left:1077.65px;top:18.90px;font-size:15.8px;color:#1f2021;transform:scaleY(1.07);transform-origin:0 15.4px;">0</span><span style="left:1244.70px;top:18.90px;font-size:15.8px;letter-spacing:0.230px;color:#1f2021;transform:scaleY(1.07);transform-origin:0 15.4px;">0,00 ₽</span><span style="left:1427.75px;top:18.90px;font-size:15.8px;letter-spacing:-0.100px;color:#1f2021;transform:scaleY(1.07);transform-origin:0 15.4px;">1,95 ₽</span><span style="left:1570.00px;top:10.60px;font-size:15.8px;letter-spacing:-0.150px;color:#1f2021;transform:scaleY(0.955);transform-origin:0 15.4px;">Авто</span><span style="left:1487.80px;top:25.60px;font-size:13.0px;letter-spacing:0.417px;color:#8a939e;">Минимальная ц...</span><span style="left:1677.50px;top:18.90px;font-size:15.8px;letter-spacing:0.139px;color:#4b88cd;transform:scaleY(1.07);transform-origin:0 15.4px;">01.02.2026</span><span style="left:1828.80px;top:18.90px;font-size:15.8px;letter-spacing:0.439px;color:#4b88cd;transform:scaleY(1.07);transform-origin:0 15.4px;">06.02.2026</span></div>
<div class="row" style="top:675px;height:53px"><span class="cb"></span><span class="tg "><i></i></span><span style="left:103.75px;top:18.00px;font-size:15.8px;letter-spacing:0.081px;color:#4b88cd;transform:scaleY(0.955);transform-origin:0 15.4px;">Кампания от VK Реклама №3</span><span class="dot"></span><span style="left:396.85px;top:18.00px;font-size:15.8px;letter-spacing:-0.035px;color:#1f2021;transform:scaleY(0.955);transform-origin:0 15.4px;">Остановлена</span><span style="left:640.05px;top:18.00px;font-size:15.8px;letter-spacing:0.417px;color:#1f2021;transform:scaleY(0.955);transform-origin:0 15.4px;">Бюджет группы</span><span style="left:772.45px;top:8.10px;font-size:15.8px;letter-spacing:0.300px;color:#1f2021;transform:scaleY(0.955);transform-origin:0 15.4px;">Клики по рекламе</span><span style="left:772.95px;top:28.30px;font-size:13.5px;letter-spacing:0.017px;color:#8a939e;">Сайт</span><span style="left:1077.65px;top:18.90px;font-size:15.8px;color:#1f2021;transform:scaleY(1.07);transform-origin:0 15.4px;">0</span><span style="left:1244.70px;top:18.90px;font-size:15.8px;letter-spacing:0.230px;color:#1f2021;transform:scaleY(1.07);transform-origin:0 15.4px;">0,00 ₽</span><span style="left:1426.10px;top:18.90px;font-size:15.8px;letter-spacing:0.230px;color:#1f2021;transform:scaleY(1.07);transform-origin:0 15.4px;">0,00 ₽</span><span style="left:1507.25px;top:18.00px;font-size:15.8px;letter-spacing:0.405px;color:#1f2021;transform:scaleY(0.955);transform-origin:0 15.4px;">Цена группы</span><span style="left:1681.65px;top:18.90px;font-size:15.8px;letter-spacing:-0.211px;color:#4b88cd;transform:scaleY(1.07);transform-origin:0 15.4px;">10.11.2025</span><span style="left:1822.65px;top:18.00px;font-size:15.8px;letter-spacing:-0.017px;color:#818c99;transform:scaleY(0.955);transform-origin:0 15.4px;">Не выбрана</span></div>
<div class="row" style="top:728px;height:53px"><span class="cb"></span><span class="tg on"><i></i></span><span style="left:104.25px;top:18.00px;font-size:15.8px;letter-spacing:0.107px;color:#4b88cd;transform:scaleY(0.955);transform-origin:0 15.4px;">2) На сообщения от 5.03</span><svg class="spark" style="left:377.3px;top:0" width="172" height="52" viewBox="0 0 172 52"><defs><clipPath id="c735"><rect x="-1" y="0" width="174" height="40.15"/></clipPath></defs><line x1="0" y1="39.60" x2="169.3" y2="39.60" stroke="#e88ac8" stroke-width="1.5"/><path d="M-0.03,31.12 C0.39,31.32 1.76,31.04 2.49,32.33 C3.22,33.62 3.73,37.69 4.35,38.85 C4.97,40.02 5.44,40.41 6.21,39.32 C6.99,38.23 8.16,33.96 9.01,32.33 C9.86,30.70 10.49,29.61 11.34,29.53 C12.19,29.46 13.17,32.33 14.14,31.86 C15.10,31.40 16.19,26.35 17.12,26.74 C18.05,27.13 18.98,35.05 19.73,34.19 C20.47,33.34 21.05,24.25 21.59,21.61 C22.13,18.97 22.45,17.57 22.99,18.35 C23.53,19.13 24.00,23.63 24.85,26.27 C25.71,28.91 27.07,33.65 28.11,34.19 C29.16,34.74 30.01,29.30 31.10,29.53 C32.18,29.77 33.58,35.12 34.64,35.59 C35.69,36.06 36.50,33.34 37.43,32.33 C38.37,31.32 39.14,29.18 40.23,29.53 C41.32,29.89 42.64,34.21 43.96,34.47 C45.28,34.74 46.91,31.01 48.15,31.12 C49.39,31.23 50.40,34.88 51.41,35.12 C52.42,35.37 53.28,32.84 54.21,32.61 C55.14,32.38 56.07,33.98 57.01,33.73 C57.94,33.48 58.79,30.57 59.80,31.12 C60.81,31.66 61.82,36.99 63.06,36.99 C64.31,36.99 66.17,32.36 67.26,31.12 C68.34,29.87 68.81,29.64 69.59,29.53 C70.36,29.42 71.09,31.63 71.92,30.47 C72.74,29.30 73.59,22.00 74.53,22.54 C75.46,23.09 76.62,32.10 77.51,33.73 C78.39,35.36 78.98,31.40 79.84,32.33 C80.69,33.26 81.86,38.23 82.63,39.32 C83.41,40.41 83.80,40.41 84.50,38.85 C85.20,37.30 86.05,32.48 86.83,30.00 C87.61,27.51 88.35,23.55 89.16,23.94 C89.97,24.33 90.70,32.56 91.67,32.33 C92.65,32.10 93.97,22.78 95.03,22.54 C96.09,22.31 97.05,28.52 98.01,30.93 C98.98,33.34 99.72,37.14 100.81,36.99 C101.90,36.83 103.37,31.79 104.54,30.00 C105.70,28.21 106.79,26.50 107.80,26.27 C108.81,26.04 109.74,27.75 110.59,28.60 C111.45,29.46 112.22,30.70 112.92,31.40 C113.62,32.10 113.93,31.55 114.79,32.80 C115.64,34.04 117.09,39.13 118.05,38.85 C119.01,38.57 119.79,31.12 120.57,31.12 C121.34,31.12 121.96,37.56 122.71,38.85 C123.45,40.14 124.18,39.47 125.04,38.85 C125.89,38.23 126.67,36.21 127.84,35.12 C129.00,34.04 130.86,32.56 132.03,32.33 C133.19,32.10 133.89,32.95 134.82,33.73 C135.76,34.50 136.69,37.38 137.62,36.99 C138.55,36.60 139.44,32.72 140.42,31.40 C141.40,30.08 142.48,28.60 143.49,29.07 C144.50,29.53 145.48,34.58 146.47,34.19 C147.47,33.80 148.45,26.74 149.46,26.74 C150.47,26.74 151.55,32.80 152.53,34.19 C153.51,35.59 154.44,34.66 155.33,35.12 C156.21,35.59 156.87,37.92 157.84,36.99 C158.82,36.06 159.99,29.30 161.20,29.53 C162.41,29.77 164.23,36.76 165.11,38.39 C166.00,40.02 165.81,39.13 166.51,39.32 C167.21,39.51 168.84,39.47 169.31,39.51" clip-path="url(#c735)" fill="none" stroke="#6391cd" stroke-width="1.05" stroke-linejoin="round" stroke-linecap="round"/></svg><span style="left:640.05px;top:18.00px;font-size:15.8px;letter-spacing:0.417px;color:#1f2021;transform:scaleY(0.955);transform-origin:0 15.4px;">Бюджет группы</span><span style="left:772.95px;top:8.10px;font-size:15.8px;letter-spacing:0.141px;color:#1f2021;transform:scaleY(0.955);transform-origin:0 15.4px;">Отправка сообщения</span><span style="left:772.95px;top:28.30px;font-size:13.5px;letter-spacing:0.181px;color:#8a939e;">Сообщество и профиль Вкон...</span><span style="left:1077.65px;top:18.90px;font-size:15.8px;color:#1f2021;transform:scaleY(1.07);transform-origin:0 15.4px;">0</span><span style="left:1244.70px;top:18.90px;font-size:15.8px;letter-spacing:0.230px;color:#1f2021;transform:scaleY(1.07);transform-origin:0 15.4px;">0,00 ₽</span><span style="left:1426.10px;top:18.90px;font-size:15.8px;letter-spacing:0.230px;color:#1f2021;transform:scaleY(1.07);transform-origin:0 15.4px;">0,00 ₽</span><span style="left:1507.25px;top:18.00px;font-size:15.8px;letter-spacing:0.405px;color:#1f2021;transform:scaleY(0.955);transform-origin:0 15.4px;">Цена группы</span><span style="left:1674.90px;top:18.90px;font-size:15.8px;letter-spacing:0.428px;color:#4b88cd;transform:scaleY(1.07);transform-origin:0 15.4px;">04.02.2026</span><span style="left:1822.65px;top:18.00px;font-size:15.8px;letter-spacing:-0.017px;color:#818c99;transform:scaleY(0.955);transform-origin:0 15.4px;">Не выбрана</span></div>
<div class="row" style="top:781px;height:53px"><span class="cb"></span><span class="tg "><i></i></span><span style="left:103.75px;top:18.00px;font-size:15.8px;letter-spacing:0.031px;color:#4b88cd;transform:scaleY(0.955);transform-origin:0 15.4px;">Копия Кампания от VK Реклама ...</span><span class="dot"></span><span style="left:396.85px;top:18.00px;font-size:15.8px;letter-spacing:-0.035px;color:#1f2021;transform:scaleY(0.955);transform-origin:0 15.4px;">Остановлена</span><span style="left:640.05px;top:18.00px;font-size:15.8px;letter-spacing:0.417px;color:#1f2021;transform:scaleY(0.955);transform-origin:0 15.4px;">Бюджет группы</span><span style="left:772.45px;top:8.10px;font-size:15.8px;letter-spacing:0.256px;color:#1f2021;transform:scaleY(0.955);transform-origin:0 15.4px;">Продвижение поста</span><span style="left:772.95px;top:28.30px;font-size:13.5px;letter-spacing:0.181px;color:#8a939e;">Сообщество и профиль Вкон...</span><span style="left:1077.65px;top:18.90px;font-size:15.8px;color:#1f2021;transform:scaleY(1.07);transform-origin:0 15.4px;">0</span><span style="left:1244.70px;top:18.90px;font-size:15.8px;letter-spacing:0.230px;color:#1f2021;transform:scaleY(1.07);transform-origin:0 15.4px;">0,00 ₽</span><span style="left:1426.10px;top:18.90px;font-size:15.8px;letter-spacing:0.230px;color:#1f2021;transform:scaleY(1.07);transform-origin:0 15.4px;">0,00 ₽</span><span style="left:1507.25px;top:18.00px;font-size:15.8px;letter-spacing:0.405px;color:#1f2021;transform:scaleY(0.955);transform-origin:0 15.4px;">Цена группы</span><span style="left:1677.25px;top:18.90px;font-size:15.8px;letter-spacing:0.167px;color:#4b88cd;transform:scaleY(1.07);transform-origin:0 15.4px;">30.01.2026</span><span style="left:1822.65px;top:18.00px;font-size:15.8px;letter-spacing:-0.017px;color:#818c99;transform:scaleY(0.955);transform-origin:0 15.4px;">Не выбрана</span></div>
<div class="row" style="top:834px;height:52px"><span class="cb"></span><span class="tg "><i></i></span><span style="left:103.75px;top:18.00px;font-size:15.8px;letter-spacing:0.081px;color:#4b88cd;transform:scaleY(0.955);transform-origin:0 15.4px;">Кампания от VK Реклама №5</span><span class="dot"></span><span style="left:396.85px;top:18.00px;font-size:15.8px;letter-spacing:-0.035px;color:#1f2021;transform:scaleY(0.955);transform-origin:0 15.4px;">Остановлена</span><span style="left:640.05px;top:18.00px;font-size:15.8px;letter-spacing:0.417px;color:#1f2021;transform:scaleY(0.955);transform-origin:0 15.4px;">Бюджет группы</span><span style="left:772.45px;top:8.10px;font-size:15.8px;letter-spacing:0.256px;color:#1f2021;transform:scaleY(0.955);transform-origin:0 15.4px;">Продвижение поста</span><span style="left:772.95px;top:28.30px;font-size:13.5px;letter-spacing:0.181px;color:#8a939e;">Сообщество и профиль Вкон...</span><span style="left:1077.65px;top:18.90px;font-size:15.8px;color:#1f2021;transform:scaleY(1.07);transform-origin:0 15.4px;">0</span><span style="left:1244.70px;top:18.90px;font-size:15.8px;letter-spacing:0.230px;color:#1f2021;transform:scaleY(1.07);transform-origin:0 15.4px;">0,00 ₽</span><span style="left:1426.10px;top:18.90px;font-size:15.8px;letter-spacing:0.230px;color:#1f2021;transform:scaleY(1.07);transform-origin:0 15.4px;">0,00 ₽</span><span style="left:1507.25px;top:18.00px;font-size:15.8px;letter-spacing:0.405px;color:#1f2021;transform:scaleY(0.955);transform-origin:0 15.4px;">Цена группы</span><span style="left:1677.25px;top:18.90px;font-size:15.8px;letter-spacing:0.167px;color:#4b88cd;transform:scaleY(1.07);transform-origin:0 15.4px;">30.01.2026</span><span style="left:1822.65px;top:18.00px;font-size:15.8px;letter-spacing:-0.017px;color:#818c99;transform:scaleY(0.955);transform-origin:0 15.4px;">Не выбрана</span></div>
<div class="row" style="top:886px;height:53px"><span class="cb"></span><span class="tg "><i></i></span><span style="left:103.75px;top:18.00px;font-size:15.8px;letter-spacing:0.075px;color:#4b88cd;transform:scaleY(0.955);transform-origin:0 15.4px;">Кампания от VK Реклама №2</span><span class="dot"></span><span style="left:396.85px;top:18.00px;font-size:15.8px;letter-spacing:-0.035px;color:#1f2021;transform:scaleY(0.955);transform-origin:0 15.4px;">Остановлена</span><span style="left:640.05px;top:18.00px;font-size:15.8px;letter-spacing:0.417px;color:#1f2021;transform:scaleY(0.955);transform-origin:0 15.4px;">Бюджет группы</span><span style="left:772.45px;top:8.10px;font-size:15.8px;letter-spacing:0.300px;color:#1f2021;transform:scaleY(0.955);transform-origin:0 15.4px;">Клики по рекламе</span><span style="left:772.70px;top:28.30px;font-size:13.5px;letter-spacing:0.336px;color:#8a939e;">Каталог товаров</span><span style="left:1077.65px;top:18.90px;font-size:15.8px;color:#1f2021;transform:scaleY(1.07);transform-origin:0 15.4px;">0</span><span style="left:1244.70px;top:18.90px;font-size:15.8px;letter-spacing:0.230px;color:#1f2021;transform:scaleY(1.07);transform-origin:0 15.4px;">0,00 ₽</span><span style="left:1426.10px;top:18.90px;font-size:15.8px;letter-spacing:0.230px;color:#1f2021;transform:scaleY(1.07);transform-origin:0 15.4px;">0,00 ₽</span><span style="left:1507.25px;top:18.00px;font-size:15.8px;letter-spacing:0.405px;color:#1f2021;transform:scaleY(0.955);transform-origin:0 15.4px;">Цена группы</span><span style="left:1677.25px;top:18.90px;font-size:15.8px;letter-spacing:0.167px;color:#4b88cd;transform:scaleY(1.07);transform-origin:0 15.4px;">19.09.2025</span><span style="left:1822.65px;top:18.00px;font-size:15.8px;letter-spacing:-0.017px;color:#818c99;transform:scaleY(0.955);transform-origin:0 15.4px;">Не выбрана</span></div>
<div class="row" style="top:939px;height:53px"><span class="cb"></span><span class="tg "><i></i></span><span style="left:103.75px;top:18.00px;font-size:15.8px;letter-spacing:0.007px;color:#4b88cd;transform:scaleY(0.955);transform-origin:0 15.4px;">Кампания от VK Реклама</span><span class="dot"></span><span style="left:396.85px;top:18.00px;font-size:15.8px;letter-spacing:-0.035px;color:#1f2021;transform:scaleY(0.955);transform-origin:0 15.4px;">Остановлена</span><span style="left:640.05px;top:18.00px;font-size:15.8px;letter-spacing:0.417px;color:#1f2021;transform:scaleY(0.955);transform-origin:0 15.4px;">Бюджет группы</span><span style="left:772.45px;top:8.10px;font-size:15.8px;letter-spacing:0.262px;color:#1f2021;transform:scaleY(0.955);transform-origin:0 15.4px;">Подписка на сообщество</span><span style="left:772.95px;top:28.30px;font-size:13.5px;letter-spacing:0.181px;color:#8a939e;">Сообщество и профиль Вкон...</span><span style="left:1077.65px;top:18.90px;font-size:15.8px;color:#1f2021;transform:scaleY(1.07);transform-origin:0 15.4px;">0</span><span style="left:1244.70px;top:18.90px;font-size:15.8px;letter-spacing:0.230px;color:#1f2021;transform:scaleY(1.07);transform-origin:0 15.4px;">0,00 ₽</span><span style="left:1426.10px;top:18.90px;font-size:15.8px;letter-spacing:0.230px;color:#1f2021;transform:scaleY(1.07);transform-origin:0 15.4px;">0,00 ₽</span><span style="left:1507.25px;top:18.00px;font-size:15.8px;letter-spacing:0.405px;color:#1f2021;transform:scaleY(0.955);transform-origin:0 15.4px;">Цена группы</span><span style="left:1677.95px;top:18.90px;font-size:15.8px;letter-spacing:0.089px;color:#4b88cd;transform:scaleY(1.07);transform-origin:0 15.4px;">25.07.2025</span><span style="left:1822.65px;top:18.00px;font-size:15.8px;letter-spacing:-0.017px;color:#818c99;transform:scaleY(0.955);transform-origin:0 15.4px;">Не выбрана</span></div>
<div class="row" style="top:992px;height:53px"><span class="cb"></span><span class="tg "><i></i></span><span style="left:103.75px;top:18.00px;font-size:15.8px;letter-spacing:0.007px;color:#4b88cd;transform:scaleY(0.955);transform-origin:0 15.4px;">Кампания от VK Реклама</span><span class="dot"></span><span style="left:396.85px;top:18.00px;font-size:15.8px;letter-spacing:-0.035px;color:#1f2021;transform:scaleY(0.955);transform-origin:0 15.4px;">Остановлена</span><span style="left:692.85px;top:10.40px;font-size:15.8px;letter-spacing:0.300px;color:#4b88cd;transform:scaleY(1.07);transform-origin:0 15.4px;">250,00 ₽</span><span style="left:701.85px;top:27.20px;font-size:13.5px;letter-spacing:0.442px;color:#8a939e;">дневной</span><span style="left:772.45px;top:8.10px;font-size:15.8px;letter-spacing:0.262px;color:#1f2021;transform:scaleY(0.955);transform-origin:0 15.4px;">Подписка на сообщество</span><span style="left:772.95px;top:28.30px;font-size:13.5px;letter-spacing:0.181px;color:#8a939e;">Сообщество и профиль Вкон...</span><span style="left:1077.65px;top:18.90px;font-size:15.8px;color:#1f2021;transform:scaleY(1.07);transform-origin:0 15.4px;">0</span><span style="left:1244.70px;top:18.90px;font-size:15.8px;letter-spacing:0.230px;color:#1f2021;transform:scaleY(1.07);transform-origin:0 15.4px;">0,00 ₽</span><span style="left:1426.10px;top:18.90px;font-size:15.8px;letter-spacing:0.230px;color:#1f2021;transform:scaleY(1.07);transform-origin:0 15.4px;">0,00 ₽</span><span style="left:1570.00px;top:10.60px;font-size:15.8px;letter-spacing:-0.150px;color:#1f2021;transform:scaleY(0.955);transform-origin:0 15.4px;">Авто</span><span style="left:1487.80px;top:25.60px;font-size:13.0px;letter-spacing:0.417px;color:#8a939e;">Минимальная ц...</span><span style="left:1678.35px;top:18.90px;font-size:15.8px;letter-spacing:0.044px;color:#4b88cd;transform:scaleY(1.07);transform-origin:0 15.4px;">31.05.2025</span><span style="left:1822.65px;top:18.00px;font-size:15.8px;letter-spacing:-0.017px;color:#818c99;transform:scaleY(0.955);transform-origin:0 15.4px;">Не выбрана</span></div>
<div class="row" style="top:1045px;height:53px"><span class="cb"></span><span class="tg "><i></i></span><span style="left:103.75px;top:18.00px;font-size:15.8px;letter-spacing:0.572px;color:#4b88cd;transform:scaleY(0.955);transform-origin:0 15.4px;">Кампания 2025-04-23</span><span class="dot"></span><span style="left:396.85px;top:18.00px;font-size:15.8px;letter-spacing:0.356px;color:#1f2021;transform:scaleY(0.955);transform-origin:0 15.4px;">2 причины</span><span class="bulb"><svg width="36" height="36" viewBox="0 0 36 36" fill="none" stroke="#f2ac44" stroke-width="1.5" stroke-linecap="round" stroke-linejoin="round"><path d="M19.54 9.22A6.6 6.6 0 1 0 13.71 20.91L14.3 24.6Q17.5 27.6 20.7 24.6L21.29 20.91A6.6 6.6 0 0 0 24.04 16.42"/><path d="M15.3 18.8L17.5 21.5L19.7 18.8M17.5 21.5V24.8"/><path d="M23.7 9.7l.85 2.450 2.450.85-2.450.85-.85 2.450-.85-2.450-2.450-.85 2.450-.85z" fill="#f2ac44" stroke="none"/></svg></span><span style="left:693.95px;top:10.40px;font-size:15.8px;letter-spacing:0.143px;color:#4b88cd;transform:scaleY(1.07);transform-origin:0 15.4px;">100,00 ₽</span><span style="left:701.85px;top:27.20px;font-size:13.5px;letter-spacing:0.442px;color:#8a939e;">дневной</span><span style="left:772.45px;top:8.10px;font-size:15.8px;letter-spacing:0.246px;color:#1f2021;transform:scaleY(0.955);transform-origin:0 15.4px;">Показы рекламы</span><span style="left:772.70px;top:28.30px;font-size:13.5px;letter-spacing:0.308px;color:#8a939e;">Пост, видео, клип, статья</span><span style="left:1077.65px;top:18.90px;font-size:15.8px;color:#1f2021;transform:scaleY(1.07);transform-origin:0 15.4px;">0</span><span style="left:1244.70px;top:18.90px;font-size:15.8px;letter-spacing:0.230px;color:#1f2021;transform:scaleY(1.07);transform-origin:0 15.4px;">0,00 ₽</span><span style="left:1426.10px;top:18.90px;font-size:15.8px;letter-spacing:0.230px;color:#1f2021;transform:scaleY(1.07);transform-origin:0 15.4px;">0,00 ₽</span><span style="left:1585.45px;top:11.10px;font-size:15.8px;letter-spacing:0.850px;color:#4b88cd;transform:scaleY(1.07);transform-origin:0 15.4px;">70</span><span style="left:1513.60px;top:25.60px;font-size:13.0px;letter-spacing:0.450px;color:#8a939e;">Целевая цена</span><span style="left:1675.85px;top:18.90px;font-size:15.8px;letter-spacing:0.322px;color:#4b88cd;transform:scaleY(1.07);transform-origin:0 15.4px;">23.04.2025</span><span style="left:1831.55px;top:18.90px;font-size:15.8px;letter-spacing:0.133px;color:#4b88cd;transform:scaleY(1.07);transform-origin:0 15.4px;">27.04.2025</span></div>
</div>
<div class="vtrack"></div><div class="vthumb"></div>
<div class="htrack"></div><div class="hthumb"></div>
<div class="foot"><i></i></div>
<div class="t"><span style="left:103.55px;top:1113.80px;font-size:15.8px;letter-spacing:0.359px;color:#2c2d2e;">Итого: 33 кампании</span><span style="left:1058.45px;top:1113.80px;font-size:15.8px;letter-spacing:0.850px;color:#2c2d2e;">236</span><span style="left:1235.85px;top:1113.80px;font-size:15.8px;letter-spacing:0.225px;color:#2c2d2e;">89,77 ₽</span><span style="left:1389.05px;top:1113.80px;font-size:15.8px;letter-spacing:-0.140px;color:#2c2d2e;">21 186,26 ₽</span></div>
<div class="vk"><span class="abs" style="left:15px;top:15px;width:25px;height:24.800px;border-radius:6.500px;background:#fff"></span>
<svg class="abs" style="left:19px;top:21.600px" width="16.800" height="11.600" viewBox="0 0 20 14" preserveAspectRatio="none"><path fill="#2688eb" d="M10.900 13.400C4.500 13.400.8 9 .6 1.600h3.200c.1 5.400 2.500 7.700 4.400 8.200V1.600h3v4.700c1.900-.2 3.800-2.300 4.500-4.700h3c-.5 2.900-2.600 5-4.100 5.900 1.500.7 3.900 2.600 4.800 5.900h-3.300c-.7-2.200-2.500-3.900-4.900-4.200v4.200z"/></svg></div>
</body></html>
